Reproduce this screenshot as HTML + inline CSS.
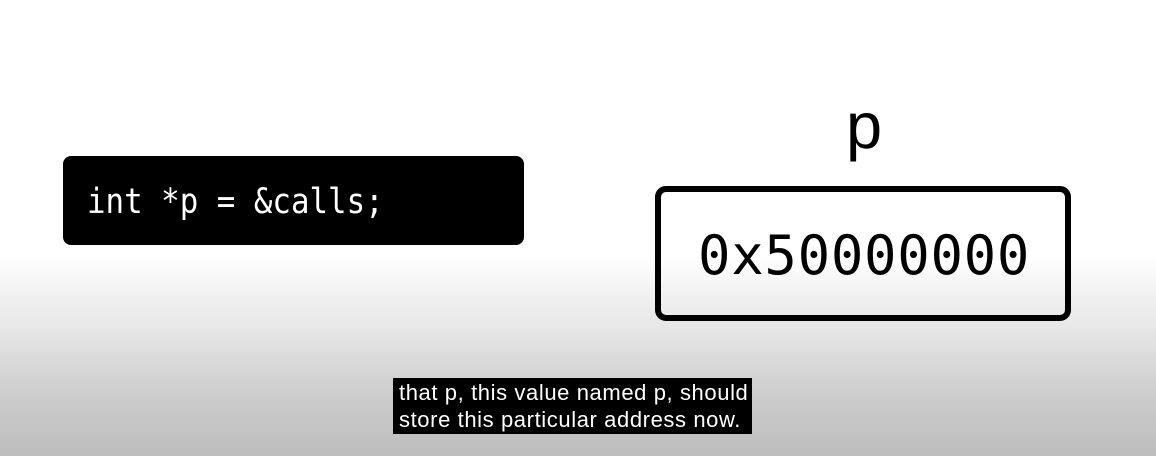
<!DOCTYPE html>
<html><head><style>
html,body{margin:0;padding:0}
body{width:1156px;height:456px;position:relative;overflow:hidden;
background:linear-gradient(to bottom,#fff 0px,#fff 255px,#e6e6e6 330px,#cbcbcb 400px,#bdbdbd 456px);
font-family:"Liberation Sans",sans-serif}
.code{position:absolute;left:63px;top:156px;width:461px;height:89px;background:#000;border-radius:8px}
.t{position:absolute;white-space:pre;line-height:1}
.box{position:absolute;left:655px;top:186px;width:404px;height:123px;border:6px solid #000;border-radius:11px;background:transparent}
.cap{position:absolute;left:393px;top:378px;width:359px;height:56px;background:#000}
.cap div{color:#fff;font-family:"Liberation Sans",sans-serif;font-size:22px;letter-spacing:0.6px;line-height:27px;position:absolute;left:6px;top:1px;white-space:nowrap}
</style></head><body>
<div class="code"></div>
<div class="t" style="left:87px;top:185px;font-family:'DejaVu Sans Mono',monospace;font-size:35px;color:#fff;transform:scaleX(0.88);transform-origin:0 0">int *p = &amp;calls;</div>
<div class="t" style="left:846px;top:93px;font-size:65px;color:#000">p</div>
<div class="box"></div>
<div class="t" style="left:698px;top:229px;font-family:'DejaVu Sans Mono',monospace;font-size:54px;letter-spacing:0.7px;color:#000">0x50000000</div>
<div class="cap"><div>that p, this value named p, should<br>store this particular address now.</div></div>
</body></html>
